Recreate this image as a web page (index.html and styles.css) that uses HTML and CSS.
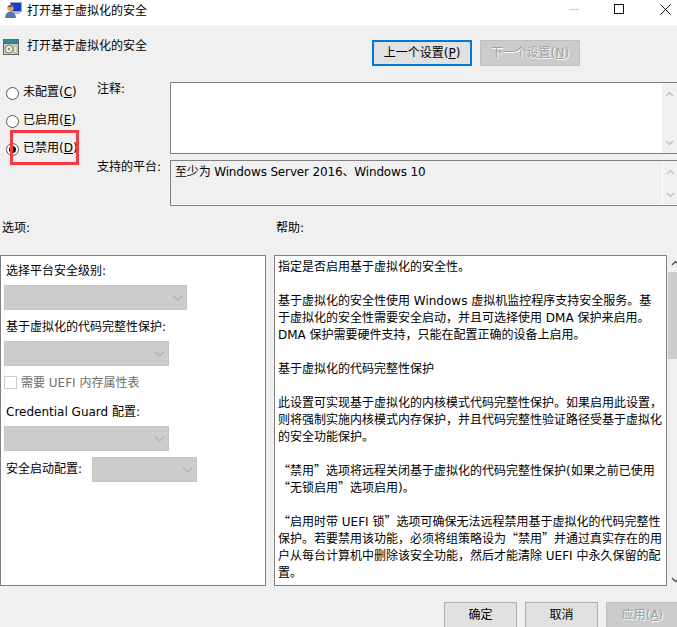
FILE: index.html
```html
<!DOCTYPE html>
<html lang="zh-CN">
<head>
<meta charset="utf-8">
<title>打开基于虚拟化的安全</title>
<link rel="stylesheet" href="styles.css">
</head>
<body>
<div class="window">
  <div class="titlebar">
    <svg class="app-icon" width="17" height="16" viewBox="0 0 17 16">
      <rect x="5" y="0" width="12" height="10" fill="#9aa6bd"/>
      <rect x="6" y="1" width="10" height="8" fill="#1a3ad0"/>
      <rect x="9" y="10" width="6" height="2" fill="#b4bac6"/>
      <circle cx="5.5" cy="6" r="3.2" fill="#d9a878"/>
      <path d="M2.3 5.5 Q5.5 1 8.7 5.5 Q5.5 3.8 2.3 5.5Z" fill="#5a3f25"/>
      <path d="M0 16 Q0.5 9.5 5.5 9.5 Q10.5 9.5 11 16Z" fill="#557aa6"/>
    </svg>
    <span class="title-text">打开基于虚拟化的安全</span>
    <div class="controls">
      <span class="ctl-min"></span>
      <span class="ctl-max"></span>
      <svg class="ctl-close" width="11" height="11" viewBox="0 0 11 11"><path d="M.5.5l10 10M10.5.5l-10 10" stroke="#111" stroke-width="1" fill="none"/></svg>
    </div>
  </div>

  <div class="body">
    <div class="header">
      <div class="heading">
        <svg class="doc-icon" width="16" height="16" viewBox="0 0 16 16">
          <rect x="0" y="0" width="16" height="16" fill="#566a6e"/>
          <rect x="1" y="1" width="14" height="3" fill="#2f8a94"/>
          <rect x="1" y="5" width="14" height="10" fill="#d9d4c6"/>
          <circle cx="6" cy="10" r="4" fill="#f1efe8" stroke="#77756b"/>
          <circle cx="6" cy="10" r="1.2" fill="#8c8a80"/>
          <rect x="11" y="7" width="3" height="7" fill="#f6f1c9" stroke="#8a8a70" stroke-width=".6"/>
        </svg>
        <span>打开基于虚拟化的安全</span>
      </div>
      <div class="nav">
        <div class="btn btn-primary">上一个设置(<u>P</u>)</div>
        <div class="btn btn-disabled">下一个设置(<u>N</u>)</div>
      </div>
    </div>

    <div class="config">
      <div class="radios">
        <div class="radio-row"><span class="radio"></span><span class="radio-text">未配置(<u>C</u>)</span></div>
        <div class="radio-row"><span class="radio"></span><span class="radio-text">已启用(<u>E</u>)</span></div>
        <div class="radio-row"><span class="radio radio-on"></span><span class="radio-text">已禁用(<u>D</u>)</span></div>
        <div class="highlight"></div>
      </div>
      <div class="fields">
        <div class="field field-comment">
          <div class="field-label">注释:</div>
          <div class="box box-white">
            <div class="scroll scroll-white">
              <svg width="9" height="6" viewBox="0 0 9 6"><path d="M1 5l3.5-3.5L8 5" class="chev"/></svg>
              <svg width="9" height="6" viewBox="0 0 9 6"><path d="M1 1l3.5 3.5L8 1" class="chev"/></svg>
            </div>
          </div>
        </div>
        <div class="field field-platform">
          <div class="field-label">支持的平台:</div>
          <div class="box box-gray">
            <div class="platform-text">至少为 Windows Server 2016、Windows 10</div>
            <div class="scroll scroll-gray">
              <svg width="9" height="6" viewBox="0 0 9 6"><path d="M1 5l3.5-3.5L8 5" class="chev"/></svg>
              <svg width="9" height="6" viewBox="0 0 9 6"><path d="M1 1l3.5 3.5L8 1" class="chev"/></svg>
            </div>
          </div>
        </div>
      </div>
    </div>

    <div class="section-labels">
      <span class="label-options">选项:</span>
      <span class="label-help">帮助:</span>
    </div>

    <div class="panels">
      <div class="options">
        <div class="opt-label first">选择平台安全级别:</div>
        <div class="select select-wide"><svg width="11" height="6" viewBox="0 0 11 6"><path d="M1 1l4.5 4L10 1" class="chev-sel"/></svg></div>
        <div class="opt-label">基于虚拟化的代码完整性保护:</div>
        <div class="select"><svg width="11" height="6" viewBox="0 0 11 6"><path d="M1 1l4.5 4L10 1" class="chev-sel"/></svg></div>
        <div class="check-row"><span class="check"></span><span class="check-text">需要 UEFI 内存属性表</span></div>
        <div class="opt-label cred">Credential Guard 配置:</div>
        <div class="select"><svg width="11" height="6" viewBox="0 0 11 6"><path d="M1 1l4.5 4L10 1" class="chev-sel"/></svg></div>
        <div class="boot-row">
          <span class="boot-label">安全启动配置:</span>
          <div class="select select-small"><svg width="11" height="6" viewBox="0 0 11 6"><path d="M1 1l4.5 4L10 1" class="chev-sel"/></svg></div>
        </div>
      </div>
      <div class="help">
        <p>指定是否启用基于虚拟化的安全性。</p>
        <p>基于虚拟化的安全性使用 Windows 虚拟机监控程序支持安全服务。基<br>于虚拟化的安全性需要安全启动，并且可选择使用 DMA 保护来启用。<br>DMA 保护需要硬件支持，只能在配置正确的设备上启用。</p>
        <p>基于虚拟化的代码完整性保护</p>
        <p>此设置可实现基于虚拟化的内核模式代码完整性保护。如果启用此设置，<br>则将强制实施内核模式内存保护，并且代码完整性验证路径受基于虚拟化<br>的安全功能保护。</p>
        <p><span class="q">“</span>禁用<span class="q">”</span>选项将远程关闭基于虚拟化的代码完整性保护(如果之前已使用<br><span class="q">“</span>无锁启用<span class="q">”</span>选项启用)。</p>
        <p><span class="q">“</span>启用时带 UEFI 锁<span class="q">”</span>选项可确保无法远程禁用基于虚拟化的代码完整性<br>保护。若要禁用该功能，必须将组策略设为<span class="q">“</span>禁用<span class="q">”</span>并通过真实存在的用<br>户从每台计算机中删除该安全功能，然后才能清除 UEFI 中永久保留的配<br>置。</p>
      </div>
      <div class="help-scroll">
        <svg class="arrow" width="9" height="6" viewBox="0 0 9 6"><path d="M1 5l3.5-3.5L8 5" class="chev-dark"/></svg>
        <div class="thumb"></div>
        <svg class="arrow down" width="9" height="6" viewBox="0 0 9 6"><path d="M1 1l3.5 3.5L8 1" class="chev-dark"/></svg>
      </div>
    </div>

    <div class="footer">
      <div class="btn-foot">确定</div>
      <div class="btn-foot">取消</div>
      <div class="btn-foot btn-foot-disabled">应用(<u>A</u>)</div>
    </div>
  </div>
</div>
</body>
</html>
```
FILE: styles.css
```css
* { box-sizing: border-box; }
html, body { margin: 0; padding: 0; }
body {
  width: 677px;
  height: 627px;
  overflow: hidden;
  background: #f0f0f0;
  color: #000;
  font-family: "DejaVu Sans", "Noto Sans CJK SC", sans-serif;
  font-size: 12px;
  line-height: 17px;
}
u { text-underline-offset: 1px; }
.window { width: 677px; height: 627px; overflow: hidden; }

.titlebar {
  height: 25px;
  background: #fff;
  display: flex;
  align-items: flex-start;
  padding-left: 5px;
}
.app-icon { margin-top: 2px; flex: none; }
.title-text { margin: 3px 0 0 5px; }
.controls { margin-left: auto; display: flex; align-items: flex-start; padding-right: 6px; }
.ctl-min { width: 10px; height: 1px; background: #ccc; margin: 9px 35px 0 0; }
.ctl-max { width: 10px; height: 10px; border: 1px solid #111; margin: 4px 36px 0 0; }
.ctl-close { margin-top: 4px; }

.body { background: #f0f0f0; }

.header { display: flex; height: 57px; padding-top: 15px; }
.heading { display: flex; align-items: flex-start; width: 372px; padding-left: 3px; }
.doc-icon { margin-top: -1px; flex: none; }
.heading span { margin: -2px 0 0 8px; }
.nav { display: flex; gap: 8px; }
.btn {
  width: 100px;
  height: 26px;
  padding-top: 1px;
  display: flex;
  align-items: center;
  justify-content: center;
}
.btn-primary { background: #e1e1e1; border: 2px solid #0078d7; }
.btn-disabled { background: #ccc; border: 1px solid #bfbfbf; color: #a0a0a0; text-shadow: 1px 1px 0 #fff; }

.config { display: flex; height: 124px; }
.radios { position: relative; width: 97px; flex: none; padding-left: 6px; margin-top: -3px; white-space: nowrap; }
.radio-row { display: flex; align-items: center; gap: 4px; height: 28px; }
.radio-text { margin-top: -1px; }
.radio {
  width: 13px;
  height: 13px;
  border: 1px solid #555;
  border-radius: 50%;
  background: #fff;
  flex: none;
  display: flex;
  align-items: center;
  justify-content: center;
}
.radio-on::after { content: ""; width: 7px; height: 7px; border-radius: 50%; background: #111; }
.highlight {
  position: absolute;
  left: 10px;
  top: 51px;
  width: 69px;
  height: 35px;
  border: 3px solid #f33b41;
}
.fields { width: 600px; flex: none; }
.field { display: flex; }
.field-comment { height: 78px; }
.field-label { width: 73px; flex: none; margin-top: -1px; white-space: nowrap; }
.box { width: 520px; flex: none; border: 1px solid #808080; display: flex; justify-content: space-between; }
.box-white { height: 72px; background: #fff; }
.box-gray { height: 46px; background: #f0f0f0; box-shadow: inset 0 -1px 0 #fff; }
.platform-text { padding: 3px 0 0 4px; letter-spacing: -0.15px; }
.scroll {
  width: 15px;
  margin-left: auto;
  margin-right: 12px;
  display: flex;
  flex-direction: column;
  justify-content: space-between;
  align-items: center;
  flex: none;
}
.scroll-white { background: #f0f0f0; padding: 8px 0 7px; }
.scroll-gray { border-left: 1px solid #fff; padding: 8px 0 7px; }
.chev { fill: none; stroke: #c2c2c2; stroke-width: 1.5; }
.chev-dark { fill: none; stroke: #555; stroke-width: 1.5; }
.chev-sel { fill: none; stroke: #a0a0a0; stroke-width: 1; }

.section-labels { display: flex; height: 49px; padding-top: 15px; }
.label-options { width: 276px; padding-left: 2px; margin-top: -1px; }
.label-help { margin-top: -1px; }

.panels { display: flex; height: 331px; }
.options {
  width: 266px;
  height: 331px;
  background: #fff;
  border: 1px solid #808080;
  padding: 7px 0 0 3px;
}
.opt-label { margin: 9px 0 5px 2px; }
.opt-label.first { margin-top: 0; }
.opt-label.cred { margin: 13px 0 5px 2px; }
.select {
  width: 165px;
  height: 25px;
  background: #ccc;
  border: 1px solid #c4c4c4;
  display: flex;
  align-items: center;
  justify-content: flex-end;
  padding-right: 3px;
}
.select-wide { width: 183px; }
.select-small { width: 105px; }
.check-row { display: flex; align-items: flex-start; gap: 4px; height: 17px; margin-top: 8px; color: #6d6d6d; }
.check { width: 13px; height: 13px; margin-top: 2px; border: 1px solid #ccc; background: #fff; flex: none; }
.check-text { margin-top: 1px; }
.boot-row { display: flex; align-items: center; margin: 6px 0 0 2px; }
.boot-label { width: 86px; flex: none; margin-top: -1px; }

.help {
  width: 393px;
  height: 331px;
  margin-left: 8px;
  background: #fff;
  border: 1px solid #808080;
  padding: 3px 0 0 3px;
  overflow: hidden;
  white-space: nowrap;
  flex: none;
}
.help p { margin: 0 0 17px; }
.q { font-family: "Noto Sans CJK SC", sans-serif; line-height: 0; }
.help-scroll {
  width: 10px;
  display: flex;
  flex-direction: column;
  align-items: flex-start;
  padding: 5px 0 0 1px;
  flex: none;
}
.arrow { margin-left: 3px; flex: none; }
.thumb { width: 9px; height: 87px; background: #cdcdcd; margin-top: 6px; flex: none; }
.help-scroll .down { margin-top: 218px; }

.footer { display: flex; gap: 8px; padding: 16px 0 0 444px; width: 760px; }
.btn-foot {
  width: 73px;
  height: 26px;
  padding-top: 1px;
  background: #e1e1e1;
  border: 1px solid #adadad;
  display: flex;
  align-items: center;
  justify-content: center;
  flex: none;
}
.btn-foot-disabled { background: #ccc; border-color: #bfbfbf; color: #a0a0a0; text-shadow: 1px 1px 0 #fff; }
```
